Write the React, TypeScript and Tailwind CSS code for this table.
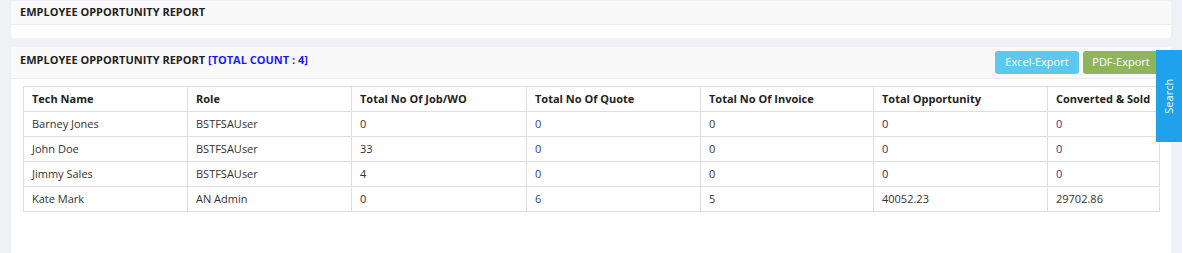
import React from 'react';

// Employee opportunity report rows
const ROWS = [
  { name: 'Barney Jones', role: 'BSTFSAUser', jobs: '0', quotes: '0', invoices: '0', opportunity: '0', sold: '0' },
  { name: 'John Doe', role: 'BSTFSAUser', jobs: '33', quotes: '0', invoices: '0', opportunity: '0', sold: '0' },
  { name: 'Jimmy Sales', role: 'BSTFSAUser', jobs: '4', quotes: '0', invoices: '0', opportunity: '0', sold: '0' },
  { name: 'Kate Mark', role: 'AN Admin', jobs: '0', quotes: '6', invoices: '5', opportunity: '40052.23', sold: '29702.86' },
];

const COLUMNS = [
  { label: 'Tech Name', width: 'w-[164px]' },
  { label: 'Role', width: 'w-[164px]' },
  { label: 'Total No Of Job/WO', width: 'w-[175px]' },
  { label: 'Total No Of Quote', width: 'w-[174px]' },
  { label: 'Total No Of Invoice', width: 'w-[173px]' },
  { label: 'Total Opportunity', width: 'w-[174px]' },
  { label: 'Converted & Sold', width: 'w-[112px]' },
];

const cell = 'border border-[#dddddd] px-[8px] h-[25px] align-middle';

export default function App() {
  return (
    <div className="relative min-h-[253px] bg-[#f0f1f6] pt-px px-[11px] text-[11px] text-[#333333] font-['Open_Sans',sans-serif] overflow-hidden">
      {/* Top card */}
      <div className="bg-white rounded-[3px] mb-[9px]">
        <div className="h-[24px] bg-[#f9f9fa] border-b border-[#ececec] px-[9px] flex items-center rounded-t-[3px]">
          <span className="font-bold text-[#222]">EMPLOYEE OPPORTUNITY REPORT</span>
        </div>
        <div className="h-[13px]" />
      </div>

      {/* Report card */}
      <div className="bg-white rounded-t-[3px] min-h-[206px]">
        <div className="h-[32px] bg-[#f9f9fa] border-b border-[#ececec] pl-[9px] pr-[12px] flex items-start justify-between rounded-t-[3px]">
          <span className="font-bold text-[#222] mt-[5px]">
            EMPLOYEE OPPORTUNITY REPORT <span className="text-[#1a1aff]">[TOTAL COUNT : 4]</span>
          </span>
          <div className="flex gap-[4px] mt-[4px]">
            <button className="h-[23px] w-[84px] rounded-[3px] bg-[#5bc8f0] text-white text-[11px]">Excel-Export</button>
            <button className="h-[23px] w-[76px] rounded-[3px] bg-[#8fb45a] text-white text-[11px]">PDF-Export</button>
          </div>
        </div>

        <div className="pt-[7px] pl-[12px]">
          <table className="table-fixed border-collapse w-[1136px]">
            <thead>
              <tr>
                {COLUMNS.map((col) => (
                  <th key={col.label} className={`${cell} ${col.width} text-left font-bold text-[#222]`}>
                    {col.label}
                  </th>
                ))}
              </tr>
            </thead>
            <tbody>
              {ROWS.map((row) => (
                <tr key={row.name}>
                  <td className={cell}>{row.name}</td>
                  <td className={cell}>{row.role}</td>
                  <td className={cell}>{row.jobs}</td>
                  <td className={`${cell} text-[#2a3f8c]`}>{row.quotes}</td>
                  <td className={cell}>{row.invoices}</td>
                  <td className={cell}>{row.opportunity}</td>
                  <td className={`${cell} ${row.sold === '0' ? 'text-[#2a3f8c]' : ''}`}>{row.sold}</td>
                </tr>
              ))}
            </tbody>
          </table>
        </div>
      </div>

      {/* Search side tab */}
      <div className="absolute right-0 top-[50px] w-[26px] h-[92px] bg-[#1fa1ec] flex items-center justify-center">
        <span className="-rotate-90 text-white text-[11px] whitespace-nowrap">Search</span>
      </div>
    </div>
  );
}
